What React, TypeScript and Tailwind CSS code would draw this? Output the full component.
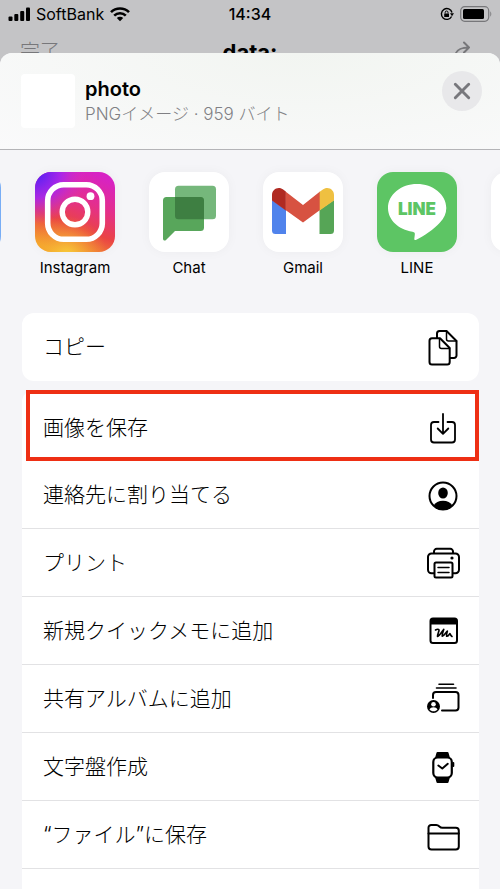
import { type ReactNode } from 'react'

const stroke = {
  fill: 'none',
  stroke: 'currentColor',
  strokeWidth: 2,
  strokeLinecap: 'round',
  strokeLinejoin: 'round'
} as const

function Glyph ({ children }: { children: ReactNode }) {
  return (
    <svg className="w-10 h-10 shrink-0" viewBox="0 0 40 40" aria-hidden="true" {...stroke}>
      {children}
    </svg>
  )
}

const CopyIcon = () => (
  <Glyph>
    <path d="M14 11V6.5a2.5 2.5 0 0 1 2.5-2.5H23.5L33.5 14v14.5A2.5 2.5 0 0 1 31 31h-4" />
    <path d="M23.5 4v8a2 2 0 0 0 2 2h8" strokeWidth="1.5" />
    <path d="M9 11.3h8L26.7 21v14a2.5 2.5 0 0 1-2.5 2.5H9A2.5 2.5 0 0 1 6.5 35V13.8A2.5 2.5 0 0 1 9 11.3z" />
    <path d="M16.5 11.5v8a2 2 0 0 0 2 2h8" strokeWidth="1.5" />
  </Glyph>
)

const SaveIcon = () => (
  <Glyph>
    <path d="M15.5 14H11A3 3 0 0 0 8 17V31.5A3 3 0 0 0 11 34.500h18A3 3 0 0 0 32 31.500V17A3 3 0 0 0 29 14h-4.500" strokeWidth="1.8" />
    <path d="M20 6v19.500M14.700 20.500l5.300 5.400 5.300-5.400" strokeWidth="1.8" />
  </Glyph>
)

const ContactIcon = () => (
  <Glyph>
    <circle cx="20" cy="21" r="13.5" />
    <ellipse cx="20" cy="18" rx="4.8" ry="5.5" fill="currentColor" stroke="none" />
    <path d="M10.6 30.5c1.8-3 5.2-4.7 9.4-4.7s7.6 1.7 9.4 4.700A13.5 13.5 0 0 1 10.600 30.500z" fill="currentColor" stroke="none" />
  </Glyph>
)

const PrinterIcon = () => (
  <Glyph>
    <path d="M11 10V8.5A2.7 2.7 0 0 1 13.700 5.800h13.600A2.700 2.700 0 0 1 30 8.500V10" />
    <path d="M11 30.300H8.500A3.500 3.500 0 0 1 5 26.800V14a3.500 3.500 0 0 1 3.500-3.500h24A3.500 3.500 0 0 1 36 14v12.800a3.500 3.500 0 0 1-3.500 3.500H30" />
    <rect x="11.5" y="19.5" width="18" height="15" rx="1.5" />
    <path d="M15 24.500h11M15 29.500h11" strokeWidth="1.5" />
    <circle cx="29" cy="15" r="1.6" fill="currentColor" stroke="none" />
  </Glyph>
)

const MemoIcon = () => (
  <Glyph>
    <rect x="7.5" y="7.5" width="26.5" height="24.5" rx="2.5" />
    <path d="M7.500 8h26.500v5.500H7.500z" fill="currentColor" stroke="none" />
    <path d="M12.500 19c1.500-1 3.800-1.300 3.500.5-.3 1.800-1.600 4-1.500 6 2-.6 4.500-5 6.300-7.200-.7 2.400-1.800 4.800-1.600 7 2-.4 3.400-3.400 5.200-5.300-.6 1.800-1.200 3.500-.8 5.300 1.700.1 2.300-1.600 3.300-2.800.6 1.200.9 2.300 2.100 3" strokeWidth="1.6" />
  </Glyph>
)

const AlbumIcon = () => (
  <Glyph>
    <path d="M16 5.300h14.500M13.500 9h19.500" strokeWidth="1.6" />
    <path d="M10 19v-3a3 3 0 0 1 3-3h19.500a3 3 0 0 1 3 3v12.500a3 3 0 0 1-3 3H19" />
    <circle cx="10.5" cy="27.5" r="6.5" fill="currentColor" stroke="none" />
    <circle cx="10.5" cy="25.3" r="2.3" fill="#fff" stroke="none" />
    <path d="M6.500 30.500c.7-1.600 2.200-2.300 4-2.300s3.300.7 4 2.300c-1 1.200-2.300 1.800-4 1.800s-3-.6-4-1.800z" fill="#fff" stroke="none" />
  </Glyph>
)

const WatchIcon = () => (
  <Glyph>
    <path d="M14.500 5h10a1 1 0 0 1 1 .8L27 11H12l1.500-5.200a1 1 0 0 1 1-.8zM12 30h15l-1.500 5.200a1 1 0 0 1-1 .8h-10a1 1 0 0 1-1-.8z" fill="currentColor" stroke="none" />
    <rect x="10.3" y="10.5" width="18.5" height="20" rx="4.5" fill="#fff" strokeWidth="2.2" />
    <path d="M30.300 16v3" />
    <path d="M15.300 18.500l4 3 5.500-4.700" />
  </Glyph>
)

const FolderIcon = () => (
  <Glyph>
    <path d="M5.500 31.500V12.700a2.700 2.700 0 0 1 2.700-2.700h5c1.700 0 2.400.7 3.200 1.500.9.900 1.500 1.300 2.900 1.300h13.500a3 3 0 0 1 3 3v15.700a3 3 0 0 1-3 3H8.500a3 3 0 0 1-3-3z" />
    <path d="M5.500 18.500h30.300" />
  </Glyph>
)

const InstagramLogo = () => (
  <svg className="w-full h-full" viewBox="0 0 80 80" aria-hidden="true">
    <defs>
      <linearGradient id="ig-base" x1="0.3" y1="1" x2="0.7" y2="0">
        <stop offset="0" stopColor="#f5a52c" />
        <stop offset="0.35" stopColor="#ea4444" />
        <stop offset="0.65" stopColor="#e42f8b" />
        <stop offset="1" stopColor="#d722c4" />
      </linearGradient>
      <radialGradient id="ig-blue" cx="0" cy="0" r="0.65">
        <stop offset="0" stopColor="#4a1ff5" />
        <stop offset="0.5" stopColor="#a326f0" stopOpacity="0.9" />
        <stop offset="1" stopColor="#d92bd0" stopOpacity="0" />
      </radialGradient>
      <radialGradient id="ig-yellow" cx="0.4" cy="1.05" r="0.5">
        <stop offset="0" stopColor="#f8cf3a" />
        <stop offset="1" stopColor="#f39a30" stopOpacity="0" />
      </radialGradient>
    </defs>
    <rect width="80" height="80" fill="url(#ig-base)" />
    <rect width="80" height="80" fill="url(#ig-blue)" />
    <rect width="80" height="80" fill="url(#ig-yellow)" />
    <rect x="12.7" y="12.7" width="54.6" height="54.6" rx="16" fill="none" stroke="#fff" strokeWidth="5.6" />
    <circle cx="40" cy="40" r="12.8" fill="none" stroke="#fff" strokeWidth="5.4" />
    <circle cx="55.5" cy="24.2" r="3.9" fill="#fff" />
  </svg>
)

const ChatLogo = () => (
  <svg className="w-full h-full" viewBox="0 0 80 80" aria-hidden="true">
    <rect x="26" y="13.7" width="41" height="33.6" rx="3.5" fill="#75b77b" />
    <path d="M17.500 25h34a3.500 3.500 0 0 1 3.500 3.500v27a3.500 3.500 0 0 1-3.500 3.500H26l-9 9c-1.200 1.100-3 .5-3-1.200V28.500a3.500 3.500 0 0 1 3.500-3.500z" fill="#58a65b" />
    <path d="M26 25h25.500a3.500 3.500 0 0 1 3.500 3.500v18.800H29.500a3.500 3.500 0 0 1-3.500-3.500z" fill="#3e7f42" />
  </svg>
)

const GmailLogo = () => (
  <svg className="w-full h-full" viewBox="0 0 80 80" aria-hidden="true">
    <path d="M9 28l14 10v24H12.500A3.500 3.500 0 0 1 9 58.500z" fill="#5083ec" />
    <path d="M71 28L56.500 38v24H67.500a3.500 3.500 0 0 0 3.500-3.500z" fill="#56a556" />
    <path d="M22.500 19.500L40 33l17-13.500V38L40 50.500 22.500 38z" fill="#d75241" />
    <path d="M9 28.500V23c0-6 6.500-9 11.500-5.300l2.300 1.800V38.500z" fill="#b02a22" />
    <path d="M71 28.500V23c0-6-6.500-9-11.500-5.300l-2.800 2V38.500z" fill="#efc041" />
  </svg>
)

const LineLogo = () => (
  <svg className="w-full h-full" viewBox="0 0 80 80" aria-hidden="true">
    <rect width="80" height="80" fill="#5dc564" />
    <path d="M40 12C24 12 11 22.500 11 36c0 12 10.500 21.500 24.500 23.700 2.300.4 2.500 1.300 2.300 3l-.5 4c-.1 1.200.7 1.600 2 1 7.500-3.700 17.700-10.300 23.700-17.200C67 46.300 69.300 41.500 69.300 36 69.300 22.500 56 12 40 12z" fill="#fff" />
    <text x="40" y="43" textAnchor="middle" fontSize="17" fontWeight="900" fill="#5dc564">LINE</text>
  </svg>
)

const apps = [
  { name: 'Instagram', logo: <InstagramLogo /> },
  { name: 'Chat', logo: <ChatLogo /> },
  { name: 'Gmail', logo: <GmailLogo /> },
  { name: 'LINE', logo: <LineLogo /> }
]

const actions = [
  { label: '連絡先に割り当てる', icon: <ContactIcon /> },
  { label: 'プリント', icon: <PrinterIcon /> },
  { label: '新規クイックメモに追加', icon: <MemoIcon /> },
  { label: '共有アルバムに追加', icon: <AlbumIcon /> },
  { label: '文字盤作成', icon: <WatchIcon /> },
  { label: '“ファイル”に保存', icon: <FolderIcon /> }
]

function StatusBar () {
  return (
    <div className="grid grid-cols-3 items-center h-7 px-2 shrink-0 text-base text-black">
      <div className="flex items-center gap-1.5">
        <svg className="w-[22px] h-4" viewBox="0 0 22 16" fill="currentColor" aria-hidden="true">
          <rect x="0.5" y="10.5" width="4" height="4.5" rx="1" />
          <rect x="6.3" y="8" width="4" height="7" rx="1" />
          <rect x="12.2" y="5" width="4" height="10" rx="1" />
          <rect x="18" y="1.5" width="4" height="13.5" rx="1" />
        </svg>
        <span>SoftBank</span>
        <svg className="w-5 h-4" viewBox="0 0 20 16" fill="none" stroke="currentColor" strokeWidth="2.6" aria-hidden="true">
          <path d="M1 6.200a12.800 12.800 0 0 1 18 0" />
          <path d="M4.200 9.600a8.300 8.300 0 0 1 11.600 0" />
          <path d="M10 15.300l-3.200-3.200a4.600 4.600 0 0 1 6.400 0z" fill="currentColor" stroke="none" />
        </svg>
      </div>
      <div className="text-center font-medium">14:34</div>
      <div className="flex items-center justify-end gap-1.5">
        <svg className="w-3.5 h-3.5" viewBox="0 0 14 14" fill="none" stroke="currentColor" strokeWidth="1.4" aria-hidden="true">
          <path d="M11.600 9.500A5.400 5.400 0 1 1 12 5.500" />
          <path d="M10 6.200h4l-2 3z" fill="currentColor" stroke="none" />
          <rect x="4.2" y="6.5" width="4.8" height="3.5" rx="0.5" fill="currentColor" stroke="none" />
          <path d="M5.200 6.500V5.400a1.400 1.400 0 0 1 2.800 0v1.100" strokeWidth="1" />
        </svg>
        <svg className="w-8 h-4" viewBox="0 0 32 16" aria-hidden="true">
          <rect x="0.7" y="0.7" width="28" height="14.6" rx="4" fill="none" stroke="#77777a" strokeWidth="1.2" />
          <rect x="3" y="3" width="21" height="10" rx="1.5" fill="#000" />
          <path d="M30.300 5.500c1.300.4 1.300 4.600 0 5z" fill="#77777a" />
        </svg>
      </div>
    </div>
  )
}

function ActionButton ({ label, icon }: { label: string, icon: ReactNode }) {
  return (
    <button className="flex items-center justify-between w-full h-[68px] pl-[21px] pr-4 text-[21px] font-light text-left text-black">
      <span>{label}</span>
      {icon}
    </button>
  )
}

export default function App () {
  return (
    <div className="flex flex-col h-screen overflow-hidden bg-[#c4c4c6] font-['Inter','Noto_Sans_CJK_JP',sans-serif]">
      <StatusBar />
      {/* page behind the sheet, only its top edge shows */}
      <div className="h-[25px] shrink-0 overflow-hidden">
        <div className="grid grid-cols-3 items-center h-12 px-5 text-[#77777a]">
          <span className="text-xl font-light">完了</span>
          <span className="text-center text-[22px] font-bold text-black">data:</span>
          <svg className="w-5 h-6 justify-self-end mr-2" viewBox="0 0 20 24" aria-hidden="true" {...stroke}>
            <path d="M3 18c0-7 3.500-10.500 14-10.500M12 2.500l5 5-5 5" />
          </svg>
        </div>
      </div>

      <div className="flex-1 min-h-0 overflow-hidden rounded-t-xl bg-[#f5f5f8]">
        <header className="flex items-center h-[97px] pl-[21px] pr-[18px] border-b border-[#b4b4b7] bg-radial-[at_60%_0%] from-[#f2f5f1] to-[#fafafb]">
          <div className="w-[54px] h-[54px] rounded-sm bg-white" />
          <div className="flex-1 ml-2.5">
            <h1 className="text-xl leading-[26px] font-semibold text-black">photo</h1>
            <p className="text-[17px] leading-6 font-light text-[#808084]">PNGイメージ · 959 バイト</p>
          </div>
          <button aria-label="閉じる" className="flex items-center justify-center self-start w-10 h-10 mt-[18px] rounded-full bg-[#e8e8ea] text-[#77777c]">
            <svg className="w-5 h-5" viewBox="0 0 20 20" fill="none" stroke="currentColor" strokeWidth="2.9" strokeLinecap="round" aria-hidden="true">
              <path d="M3.300 3.300l13.400 13.400M16.700 3.300L3.300 16.700" />
            </svg>
          </button>
        </header>

        <div className="flex gap-[34px] h-[163px] pt-[22px] -ml-[79px] overflow-hidden">
          <div className="w-20 h-20 shrink-0 rounded-2xl bg-[#78adf5]" />
          {apps.map((app) => (
            <button key={app.name} className="flex flex-col items-center w-20 shrink-0 text-[15px] leading-5 text-black">
              <span className="block w-20 h-20 rounded-2xl overflow-hidden bg-white shadow-[0_0_12px_rgba(0,0,0,0.04)]">{app.logo}</span>
              <span className="mt-1.5">{app.name}</span>
            </button>
          ))}
          <div className="w-20 h-20 shrink-0 rounded-2xl bg-white shadow-[0_0_12px_rgba(0,0,0,0.04)]" />
        </div>

        <div className="ml-[22px] mr-[21px] rounded-xl bg-white">
          <ActionButton label="コピー" icon={<CopyIcon />} />
        </div>

        <div className="mt-[9px] ml-[22px] mr-[21px] rounded-t-xl bg-white divide-y divide-[#e2e2e4]">
          <div className="ml-1 h-[71px] border-4 border-[#ee2f14]">
            <button className="flex items-center justify-between w-full h-full pl-[13px] pr-3 pt-1 text-[21px] font-light text-left text-black">
              <span>画像を保存</span>
              <SaveIcon />
            </button>
          </div>
          {actions.map((action) => (
            <ActionButton key={action.label} {...action} />
          ))}
          <div className="h-[68px]" />
        </div>
      </div>
    </div>
  )
}
